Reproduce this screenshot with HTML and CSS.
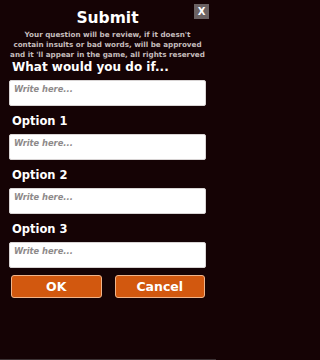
FILE: index.html
```html
<!DOCTYPE html>
<html>
<head>
<meta charset="utf-8">
<link rel="stylesheet" href="styles.css">
</head>
<body>
<div class="dialog">
  <button class="close">X</button>
  <h1 class="title">Submit</h1>
  <p class="desc">Your question will be review, if it doesn't<br>contain insults or bad words, will be approved<br>and it 'll appear in the game, all rights reserved</p>
  <h2 class="heading">What would you do if...</h2>
  <div class="field">Write here...</div>
  <h2 class="label">Option 1</h2>
  <div class="field">Write here...</div>
  <h2 class="label">Option 2</h2>
  <div class="field">Write here...</div>
  <h2 class="label">Option 3</h2>
  <div class="field">Write here...</div>
  <div class="actions">
    <button class="btn">OK</button>
    <button class="btn">Cancel</button>
  </div>
</div>
</body>
</html>
```
FILE: styles.css
```css
html, body {
  margin: 0;
  padding: 0;
}
html {
  background: #150305;
}
body {
  width: 216px;
  height: 360px;
  box-sizing: border-box;
  background: #150305;
  border-bottom: 1px solid #3d3335;
  font-family: "DejaVu Sans", sans-serif;
  color: #ffffff;
  overflow: hidden;
}
.dialog {
  position: relative;
  padding: 8px 10px 0 9px;
  display: flex;
  flex-direction: column;
}
.close {
  position: absolute;
  top: 4px;
  right: 7px;
  width: 15px;
  height: 15px;
  padding: 0;
  border: none;
  background: #6b6263;
  color: #ffffff;
  font-family: "DejaVu Sans", sans-serif;
  font-weight: bold;
  font-size: 10px;
  line-height: 15px;
  text-align: center;
}
.title {
  margin: 0;
  font-size: 15.5px;
  line-height: 20px;
  text-align: center;
  font-weight: bold;
}
.desc {
  margin: 2px -4px 0 -4px;
  font-size: 7.2px;
  line-height: 10px;
  text-align: center;
  font-weight: bold;
  white-space: nowrap;
  color: #c4bcbc;
}
.heading {
  margin: 0 0 6px 3px;
  font-size: 12px;
  line-height: 14px;
  font-weight: bold;
}
.label {
  margin: 8px 0 6px 3px;
  font-size: 11.5px;
  line-height: 14px;
  font-weight: bold;
}
.field {
  height: 26px;
  box-sizing: border-box;
  background: #ffffff;
  border: 1px solid #d8d4d4;
  border-radius: 2px;
  padding: 3px 4px;
  font-size: 8.3px;
  line-height: 10px;
  font-style: italic;
  font-weight: bold;
  color: #8e8a8a;
}
.actions {
  display: flex;
  gap: 13px;
  margin: 7px 1px 0 2px;
}
.btn {
  flex: 1;
  height: 23px;
  background: #d2580f;
  border: 1px solid #f0b48a;
  border-radius: 3px;
  color: #ffffff;
  font-family: "DejaVu Sans", sans-serif;
  font-weight: bold;
  font-size: 12.5px;
  padding: 0;
}
```
